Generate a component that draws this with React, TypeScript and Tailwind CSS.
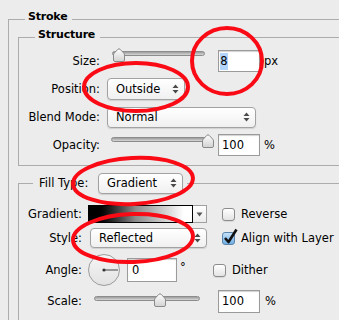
import React from 'react';

const line = 'bg-[#acacac]';

const Arrows = () => (
  <svg width="7" height="12" viewBox="0 0 7 12">
    <path d="M3.5 1.5 L6.5 5 H0.5 Z M3.5 10.5 L6.5 7 H0.5 Z" fill="#4a4a4a" />
  </svg>
);

const Select = ({ value, className }: { value: string; className: string }) => (
  <div
    className={`flex items-center justify-between rounded-[4px] border border-[#a2a2a2] bg-linear-to-b from-white to-[#f0f0f0] pl-[8px] pr-[5px] shadow-[0_1px_1px_rgba(0,0,0,0.12)] ${className}`}
  >
    <span>{value}</span>
    <Arrows />
  </div>
);

const Thumb = () => (
  <svg width="12" height="14" viewBox="0 0 12 14">
    <defs>
      <linearGradient id="th" x1="0" y1="0" x2="0" y2="1">
        <stop offset="0" stopColor="#ffffff" />
        <stop offset="1" stopColor="#d2d2d2" />
      </linearGradient>
    </defs>
    <path
      d="M5 1.2 Q6 0.4 7 1.2 L10.8 5.2 Q11.5 6 11.5 7 V12 Q11.5 13.5 10 13.5 H2 Q0.5 13.5 0.5 12 V7 Q0.5 6 1.2 5.2 Z"
      fill="url(#th)"
      stroke="#8a8a8a"
    />
  </svg>
);

const Slider = ({ className, thumb, top }: { className: string; thumb: string; top: string }) => (
  <div className={`relative self-start ${top} ${className}`}>
    <div className="h-[5px] rounded-full border border-[#8c8c8c] bg-linear-to-b from-[#9c9c9c] to-[#d8d8d8]" />
    <div className={`absolute -top-[3px] ${thumb}`}>
      <Thumb />
    </div>
  </div>
);

const Field = ({ children, className }: { children: React.ReactNode; className: string }) => (
  <div
    className={`flex items-center border border-[#9a9a9a] bg-white shadow-[inset_0_1px_1px_rgba(0,0,0,0.18)] ${className}`}
  >
    {children}
  </div>
);

const Check = ({ checked }: { checked?: boolean }) =>
  checked ? (
    <div className="relative h-[13px] w-[13px] shrink-0 rounded-[3px] border border-[#5b84ad] bg-linear-to-b from-[#c4e1f8] to-[#6faee3]">
      <svg className="absolute -left-[1px] -top-[5px]" width="17" height="18" viewBox="0 0 17 18">
        <path d="M3 10 L6.5 14 L14.5 1.5" fill="none" stroke="#111" strokeWidth="2.6" strokeLinejoin="round" />
      </svg>
    </div>
  ) : (
    <div className="h-[13px] w-[13px] shrink-0 rounded-[3px] border border-[#8c8c8c] bg-linear-to-b from-white to-[#e4e4e4] shadow-[0_1px_0_rgba(0,0,0,0.08)]" />
  );

export default function App() {
  return (
    <div className="relative h-[320px] w-[339px] overflow-hidden bg-[#ececec] font-['DejaVu_Sans',sans-serif] text-[11.5px] leading-[14px] text-black">
      {/* Stroke */}
      <div className="ml-[8px] mt-[19px] flex flex-col border-l border-[#acacac]">
        <div className="-ml-px -mt-[7px] flex h-[14px] items-center">
          <div className={`h-px w-[17px] ${line}`} />
          <span className="mb-[4px] ml-[3px] text-[11px] font-bold tracking-[-0.2px]">Stroke</span>
          <div className={`ml-[5px] h-px flex-1 ${line}`} />
        </div>

        {/* Structure */}
        <div className="ml-[9px] mt-[11px] flex flex-col border-b border-l border-[#acacac] pb-[9px]">
          <div className="-ml-px -mt-[7px] flex h-[14px] items-center">
            <div className={`h-px w-[17px] ${line}`} />
            <span className="mb-[4px] ml-[3px] text-[11px] font-bold tracking-[-0.2px]">Structure</span>
            <div className={`ml-[5px] h-px flex-1 ${line}`} />
          </div>

          <div className="flex flex-col gap-[6px] pt-[6px]">
            <div className="flex h-[22px] items-center">
              <span className="w-[81px] text-right">Size:</span>
              <Slider className="ml-[12px] w-[93px]" thumb="left-[1px]" top="mt-[1px]" />
              <Field className="ml-[13px] h-[22px] w-[42px] pl-px">
                <span className="flex h-[17px] w-[8px] items-center justify-center bg-[#b3d4fc]">8</span>
              </Field>
              <span className="ml-[4px]">px</span>
            </div>
            <div className="flex h-[22px] items-center">
              <span className="w-[81px] text-right">Position:</span>
              <Select value="Outside" className="ml-[7px] h-[22px] w-[78px]" />
            </div>
            <div className="flex h-[22px] items-center">
              <span className="w-[81px] text-right">Blend Mode:</span>
              <Select value="Normal" className="ml-[7px] h-[21px] w-[149px]" />
            </div>
            <div className="flex h-[22px] items-center">
              <span className="w-[81px] text-right">Opacity:</span>
              <Slider className="ml-[11px] w-[99px]" thumb="left-[91px]" top="mt-[3px]" />
              <Field className="ml-[8px] h-[22px] w-[42px] pl-[3px]">100</Field>
              <span className="ml-[4px]">%</span>
            </div>
          </div>
        </div>

        {/* Fill Type */}
        <div className="ml-[9px] mt-[17px] flex flex-col border-l border-[#acacac]">
          <div className="-ml-px -mt-[11px] flex h-[22px] items-center">
            <div className={`h-px w-[15px] ${line}`} />
            <span className="ml-[6px] w-[59px]">Fill Type:</span>
            <Select value="Gradient" className="h-[21px] w-[85px]" />
            <div className={`ml-[4px] h-px flex-1 ${line}`} />
          </div>

          <div className="mt-[10px] flex h-[20px] items-center">
            <span className="w-[63px] text-right">Gradient:</span>
            <div className="ml-[6px] h-[18px] w-[105px] border border-black bg-linear-to-r from-black from-[6%] via-[#8a8a8a] via-[45%] to-white to-[92%]" />
            <div className="flex h-[18px] w-[14px] items-center justify-center border border-l-0 border-[#a0a0a0] bg-linear-to-b from-white to-[#ececec]">
              <svg width="7" height="5" viewBox="0 0 7 5">
                <path d="M0.5 0.5 H6.5 L3.5 4.5 Z" fill="#555" />
              </svg>
            </div>
            <div className="ml-[15px]">
              <Check />
            </div>
            <span className="ml-[6px]">Reverse</span>
          </div>

          <div className="mt-[4px] flex h-[20px] items-center">
            <span className="w-[63px] text-right">Style:</span>
            <Select value="Reflected" className="ml-[8px] h-[20px] w-[117px]" />
            <div className="ml-[15px]">
              <Check checked />
            </div>
            <span className="ml-[6px]">Align with Layer</span>
          </div>

          <div className="mt-[5px] flex h-[34px] items-center">
            <span className="w-[63px] text-right">Angle:</span>
            <svg className="ml-[6px]" width="32" height="32" viewBox="0 0 32 32">
              <defs>
                <linearGradient id="ang" x1="0" y1="0" x2="0" y2="1">
                  <stop offset="0" stopColor="#f6f6f6" />
                  <stop offset="1" stopColor="#e2e2e2" />
                </linearGradient>
              </defs>
              <circle cx="16" cy="16" r="15.5" fill="url(#ang)" stroke="#9c9c9c" />
              <circle cx="16" cy="16" r="1.6" fill="#333" />
              <path d="M16 16 H30" stroke="#444" strokeWidth="1" />
            </svg>
            <Field className="ml-[7px] h-[24px] w-[50px] pl-[4px]">0</Field>
            <span className="ml-[3px] mb-[6px] w-[8px]">°</span>
            <div className="ml-[25px]">
              <Check />
            </div>
            <span className="ml-[6px]">Dither</span>
          </div>

          <div className="mt-[2px] flex h-[24px] items-center">
            <span className="w-[63px] text-right">Scale:</span>
            <Slider className="ml-[12px] w-[106px]" thumb="left-[60px]" top="mt-[7px]" />
            <Field className="ml-[18px] h-[23px] w-[42px] pl-[3px]">100</Field>
            <span className="ml-[5px]">%</span>
          </div>
          <div className="h-[40px]" />
        </div>
      </div>

      {/* red annotations */}
      <svg className="pointer-events-none absolute inset-0" width="339" height="320" viewBox="0 0 339 320">
        <g fill="none" stroke="#fa0a14" strokeWidth="4">
          <ellipse cx="227" cy="61" rx="35" ry="33" />
          <ellipse cx="136" cy="87" rx="52" ry="24" />
          <ellipse cx="133" cy="181" rx="60" ry="23" transform="rotate(-3 133 181)" />
          <ellipse cx="133" cy="238" rx="60" ry="24" transform="rotate(-2 133 238)" />
        </g>
      </svg>
    </div>
  );
}
